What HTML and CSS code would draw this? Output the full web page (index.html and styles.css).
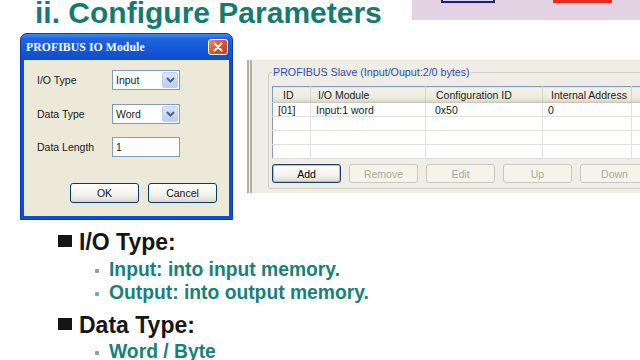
FILE: index.html
```html
<!DOCTYPE html>
<html>
<head>
<meta charset="utf-8">
<link rel="stylesheet" href="styles.css">
</head>
<body>
<div class="top">
  <h1 class="title">ii. Configure Parameters</h1>
  <div class="banner"><span class="b-blue"></span><span class="b-red"></span></div>
</div>
<div class="shots">
  <div class="dlg">
    <div class="dlg-bar">
      <span class="dlg-title">PROFIBUS IO Module</span>
      <span class="dlg-close"><svg width="10" height="10" viewBox="0 0 10 10"><path d="M1.5 1.5L8.5 8.5M8.5 1.5L1.5 8.5" stroke="#fff" stroke-width="2" stroke-linecap="round"/></svg></span>
    </div>
    <div class="dlg-body">
      <div class="field"><span class="lbl">I/O Type</span><div class="combo"><span class="val">Input</span><span class="drop"><svg width="9" height="6" viewBox="0 0 9 6"><path d="M1 1L4.5 4.5L8 1" fill="none" stroke="#4d6185" stroke-width="2"/></svg></span></div></div>
      <div class="field"><span class="lbl">Data Type</span><div class="combo"><span class="val">Word</span><span class="drop"><svg width="9" height="6" viewBox="0 0 9 6"><path d="M1 1L4.5 4.5L8 1" fill="none" stroke="#4d6185" stroke-width="2"/></svg></span></div></div>
      <div class="field"><span class="lbl">Data Length</span><div class="edit">1</div></div>
      <div class="dlg-btns"><span class="xbtn">OK</span><span class="xbtn">Cancel</span></div>
    </div>
  </div>
  <div class="slave">
    <fieldset class="grp">
      <legend>PROFIBUS Slave (Input/Ouput:2/0 bytes)</legend>
      <table class="list">
        <thead>
          <tr><th class="c1">ID</th><th class="c2">I/O Module</th><th class="c3">Configuration ID</th><th class="c4">Internal Address</th><th class="c5"></th></tr>
        </thead>
        <tbody>
          <tr><td>[01]</td><td>Input:1 word</td><td class="cfg">0x50</td><td>0</td><td></td></tr>
          <tr><td></td><td></td><td></td><td></td><td></td></tr>
          <tr><td></td><td></td><td></td><td></td><td></td></tr>
          <tr><td></td><td></td><td></td><td></td><td></td></tr>
        </tbody>
      </table>
      <div class="btns">
        <span class="xbtn def">Add</span>
        <span class="xbtn off">Remove</span>
        <span class="xbtn off">Edit</span>
        <span class="xbtn off">Up</span>
        <span class="xbtn off">Down</span>
      </div>
    </fieldset>
  </div>
</div>
<div class="points">
  <div class="head"><span class="sq"></span>I/O Type:</div>
  <div class="subs first">
    <div class="sub"><span class="dot"></span>Input: into input memory.</div>
    <div class="sub"><span class="dot"></span>Output: into output memory.</div>
  </div>
  <div class="head second"><span class="sq"></span>Data Type:</div>
  <div class="subs last">
    <div class="sub"><span class="dot"></span>Word / Byte</div>
  </div>
</div>
</body>
</html>
```
FILE: styles.css
```css
* { box-sizing: border-box; }
html, body { margin: 0; padding: 0; }
body {
  width: 640px;
  height: 360px;
  overflow: hidden;
  background: #fff;
  font-family: "Liberation Sans", Arial, sans-serif;
}

/* header */
.top { display: flex; height: 33px; align-items: flex-start; }
.title {
  margin: 0;
  padding-left: 35px;
  font-size: 30px;
  line-height: 25px;
  font-weight: bold;
  color: #177a70;
  white-space: nowrap;
}
.banner {
  margin-left: auto;
  width: 228px;
  height: 20px;
  background: #e3d1e4;
  display: flex;
  align-items: flex-start;
}
.b-blue {
  margin-left: 29px;
  width: 54px;
  height: 3px;
  border: 2px solid #1c1f7c;
  border-top: none;
  background: #d8d4ee;
}
.b-red { margin-left: 58px; width: 59px; height: 3px; background: #ea2a22; }

/* screenshots row */
.shots { display: flex; align-items: flex-start; height: 194px; }

/* dialog */
.dlg {
  margin-left: 20px;
  width: 213px;
  height: 187px;
  padding: 0 3px 3px;
  background: #0a4fd4;
  border: 1px solid #0a36b8;
  border-radius: 7px 7px 0 0;
  display: flex;
  flex-direction: column;
}
.dlg-bar {
  height: 26px;
  display: flex;
  align-items: center;
  padding-left: 3px;
  margin: 0 -3px;
  padding-right: 4px;
  border-radius: 6px 6px 0 0;
  background: linear-gradient(#3f8cf3 0%, #1f64e0 18%, #1458d8 60%, #0d4ccb 100%);
}
.dlg-title {
  font-family: "Liberation Serif", "Times New Roman", serif;
  font-weight: bold;
  font-size: 11.7px;
  color: #fff;
  letter-spacing: 0.1px;
  margin-left: 2px;
}
.dlg-close {
  margin-left: auto;
  width: 20px;
  height: 16px;
  border: 1px solid #fff;
  border-radius: 3px;
  background: linear-gradient(135deg, #f08a5e, #d8512c 55%, #c2401e);
  display: flex;
  align-items: center;
  justify-content: center;
}
.dlg-body {
  flex: 1;
  background: #ece9d8;
  padding: 10px 12px 0 13px;
  display: flex;
  flex-direction: column;
  gap: 13.5px;
  font-size: 10.5px;
  color: #1a1a1a;
}
.field { display: flex; align-items: center; height: 20px; }
.lbl { width: 75px; }
.combo, .edit {
  width: 68px;
  height: 20px;
  background: #fff;
  border: 1px solid #7f9db9;
  display: flex;
  align-items: center;
  padding-left: 3px;
}
.combo .val { flex: 1; }
.drop {
  width: 16px;
  height: 16px;
  margin-right: 1px;
  border-radius: 2px;
  background: linear-gradient(#dbe6fd, #b8cdf8);
  border: 1px solid #bccff6;
  display: flex;
  align-items: center;
  justify-content: center;
}
.dlg-btns {
  display: flex;
  justify-content: flex-end;
  gap: 9px;
  margin-top: 12px;
}
.xbtn {
  width: 69px;
  height: 20px;
  border: 1px solid #003c74;
  border-radius: 3px;
  background: linear-gradient(#ffffff, #f4f3ee 60%, #dcd8c8);
  display: flex;
  align-items: center;
  justify-content: center;
  font-size: 10.5px;
  color: #111;
}

/* slave panel */
.slave {
  margin-left: 14px;
  margin-top: 27px;
  flex: 1;
  height: 133px;
  overflow: hidden;
  background: #efeee6;
  border-left: 5px double #b5b2a4;
  padding-left: 16px;
}
.grp {
  margin: 6px 0 0 0;
  padding: 0 0 5px 3px;
  width: 420px;
  border: 1px solid #d3d0be;
  border-radius: 3px;
  min-width: 0;
}
.grp legend {
  padding: 0 1px;
  font-size: 10.7px;
  line-height: 13px;
  color: #2b4eb2;
}
.list {
  margin-top: 7px;
  width: 410px;
  border-collapse: collapse;
  border: 1px solid #7f9db9;
  background: #fff;
  font-size: 10.5px;
  color: #1a1a1a;
  table-layout: fixed;
}
.list th {
  height: 16px;
  padding: 0 0 0 8px;
  font-weight: normal;
  text-align: left;
  background: linear-gradient(#f3f2e9, #ebeadb 70%, #d8d5c6);
  border-right: 1px solid #d5d2c3;
  border-bottom: 1px solid #c9c6b6;
  color: #222;
}
.list th.c1 { width: 38px; padding-left: 10px; }
.list th.c2 { width: 115px; padding-left: 7px; }
.list th.c3 { width: 117px; padding-left: 10px; }
.list th.c4 { width: 89px; padding-left: 8px; }
.list td {
  height: 14px;
  padding: 0 0 0 5px;
  border-right: 1px solid #e3e2da;
  border-bottom: 1px solid #e3e2da;
  white-space: nowrap;
}
.list td.cfg { padding-left: 9px; }
.btns { display: flex; gap: 8px; margin-top: 5px; }
.btns .xbtn { height: 19px; }
.xbtn.def {
  border: 1px solid #1d3b6e;
  box-shadow: inset 0 0 0 1px #a6c0ec;
  color: #000;
}
.xbtn.off {
  border-color: #cac8bb;
  background: #f5f4ea;
  color: #aca899;
}

/* bullet points */
.points { padding-top: 1px; }
.head {
  display: flex;
  align-items: flex-start;
  font-size: 23px;
  line-height: 28px;
  font-weight: bold;
  color: #151515;
}
.sq {
  width: 14px;
  height: 12px;
  background: #151515;
  margin: 7px 7px 0 58px;
}
.head.second { margin-top: 7px; }
.subs.first { margin-top: 2px; }
.subs.last { margin-top: 1px; }
.sub {
  display: flex;
  align-items: center;
  font-size: 19.3px;
  line-height: 23px;
  font-weight: bold;
  color: #18807a;
}
.dot {
  width: 4px;
  height: 4px;
  border-radius: 1px;
  background: #7caaa6;
  margin: 2px 10px 0 95px;
}
```
